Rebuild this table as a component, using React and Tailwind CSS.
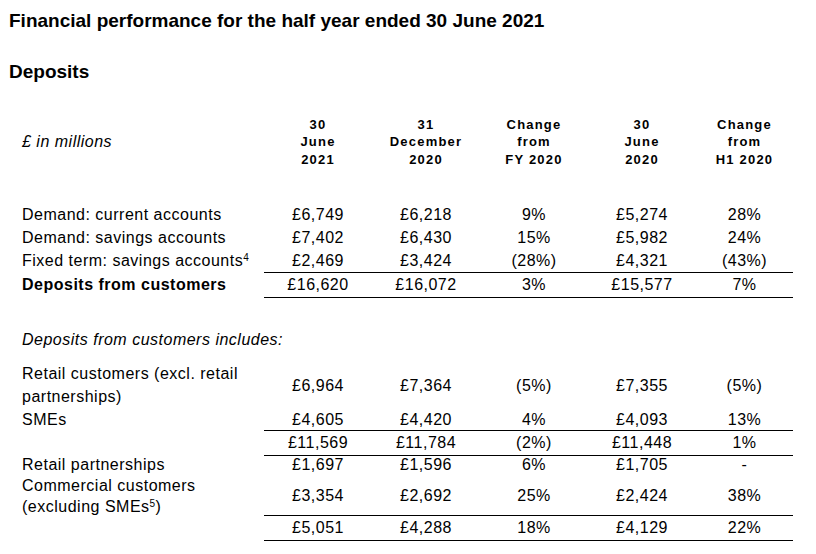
const cols = "grid grid-cols-[242px_108px_108px_108px_108px_97px]";

function Row({ label, values, h = "h-[23px]", lines = "", bold = false, labelLeading = "" }) {
  return (
    <div className={`${cols} ${h} ${bold ? "font-bold" : ""}`}>
      <div className={`flex items-center ${labelLeading}`}>
        <div>{label}</div>
      </div>
      {values.map((v, i) => (
        <div key={i} className={`flex items-center justify-center ${lines}`}>
          {v}
        </div>
      ))}
    </div>
  );
}

function App() {
  return (
    <div className="w-[816px] h-[554px] bg-white text-black font-['Liberation_Sans',Arial,sans-serif] overflow-hidden">
      <div className="pl-[9px] pt-[9px]">
        <h1 className="text-[19px] leading-[24px] font-bold">
          Financial performance for the half year ended 30 June 2021
        </h1>
        <h2 className="mt-[27px] text-[19px] leading-[24px] font-bold">Deposits</h2>
      </div>

      <div className="pl-[22px] text-[16px] tracking-[0.5px]">
        <div className={`${cols} mt-[28px] h-[60px]`}>
          <div className="flex items-center italic">£ in millions</div>
          {[
            ["30", "June", "2021"],
            ["31", "December", "2020"],
            ["Change", "from", "FY 2020"],
            ["30", "June", "2020"],
            ["Change", "from", "H1 2020"],
          ].map((c, i) => (
            <div
              key={i}
              className="flex flex-col items-center justify-center text-[13px] leading-[17.5px] font-bold tracking-[1.2px]"
            >
              {c.map((t) => (
                <span key={t}>{t}</span>
              ))}
            </div>
          ))}
        </div>

        <div className="mt-[31px]">
          <Row label="Demand: current accounts" values={["£6,749", "£6,218", "9%", "£5,274", "28%"]} />
          <Row label="Demand: savings accounts" values={["£7,402", "£6,430", "15%", "£5,982", "24%"]} />
          <Row
            label={
              <>
                Fixed term: savings accounts<sup className="text-[10px]">4</sup>
              </>
            }
            values={["£2,469", "£3,424", "(28%)", "£4,321", "(43%)"]}
          />
          <Row
            bold
            label={<span className="font-bold">Deposits from customers</span>}
            values={["£16,620", "£16,072", "3%", "£15,577", "7%"]}
            lines="border-t border-b border-black font-normal"
          />
        </div>

        <div className="mt-[34px] h-[22px] flex items-center italic">
          Deposits from customers includes:
        </div>

        <div className="mt-[12px]">
          <Row
            h="h-[45px]"
            labelLeading="leading-[22.5px]"
            label={
              <>
                Retail customers (excl. retail
                <br />
                partnerships)
              </>
            }
            values={["£6,964", "£7,364", "(5%)", "£7,355", "(5%)"]}
          />
          <Row h="h-[22px]" label="SMEs" values={["£4,605", "£4,420", "4%", "£4,093", "13%"]} />
          <Row
            label=""
            values={["£11,569", "£11,784", "(2%)", "£11,448", "1%"]}
            lines="border-t border-b border-black"
          />
          <Row h="h-[22px]" label="Retail partnerships" values={["£1,697", "£1,596", "6%", "£1,705", "-"]} />
          <Row
            h="h-[40px]"
            labelLeading="leading-[21px]"
            label={
              <>
                Commercial customers
                <br />
                (excluding SMEs<sup className="text-[10px]">5</sup>)
              </>
            }
            values={["£3,354", "£2,692", "25%", "£2,424", "38%"]}
          />
          <Row
            label=""
            values={["£5,051", "£4,288", "18%", "£4,129", "22%"]}
            lines="border-t border-b border-black"
          />
        </div>
      </div>
    </div>
  );
}

export default App;
